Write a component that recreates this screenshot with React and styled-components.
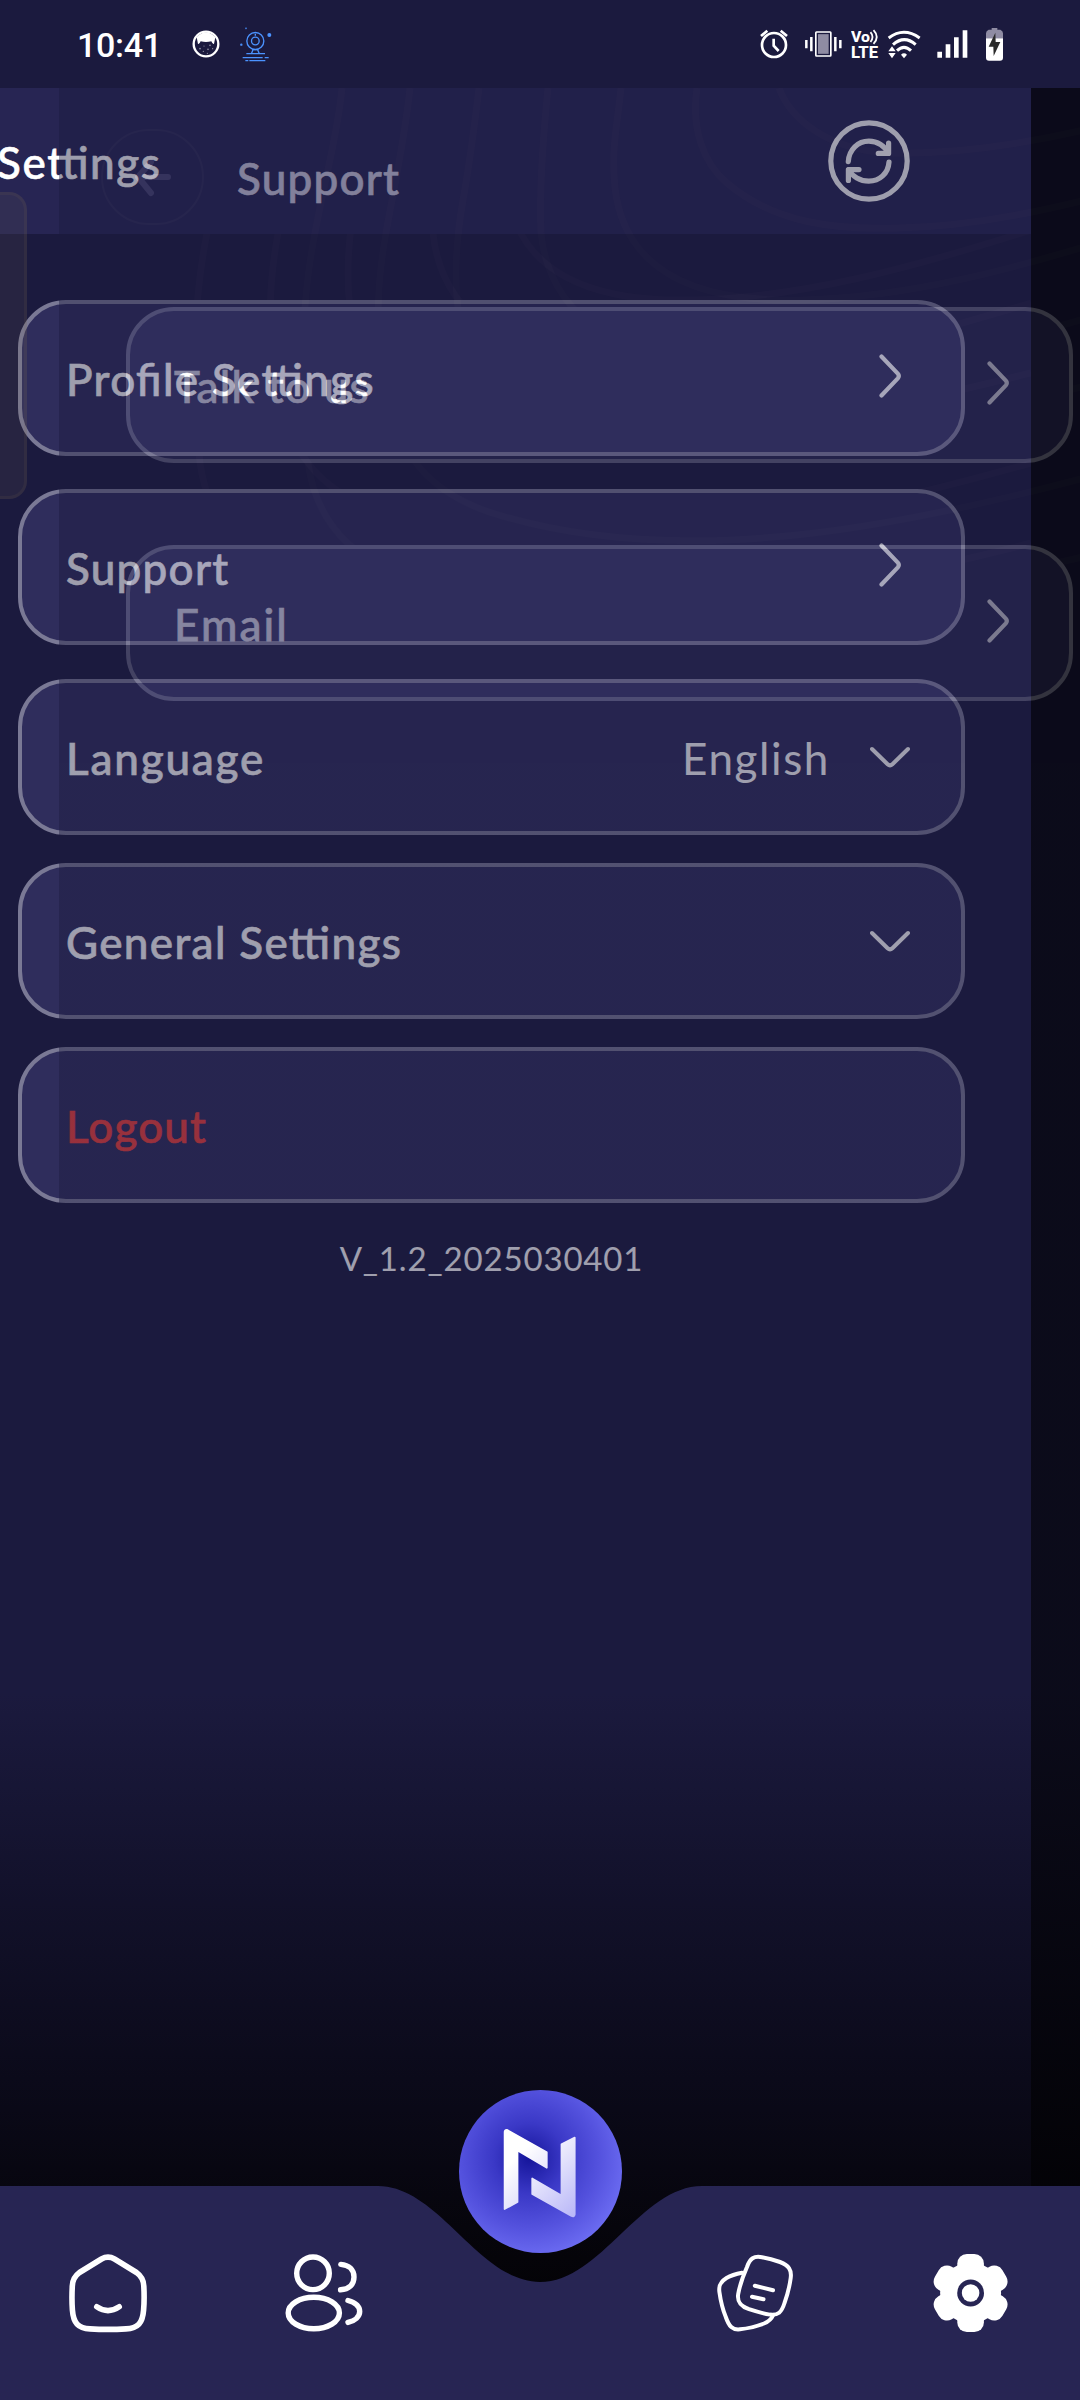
import React from "react";
import styled, { createGlobalStyle } from "styled-components";

const GlobalStyle = createGlobalStyle`
  *, *::before, *::after { box-sizing: border-box; }
  html, body { margin: 0; padding: 0; background: #000; }
  svg { display: block; flex: none; }
`;

const FONT = `Lato, "Noto Sans", sans-serif`;

const Screen = styled.div`
  width: 1080px;
  height: 2400px;
  display: grid;
  grid-template-rows: 88px 1fr;
  overflow: hidden;
  background: #000;
  font-family: ${FONT};
  color: #fff;
`;

/* ---------- status bar ---------- */

const StatusBar = styled.header`
  display: flex;
  align-items: center;
  justify-content: space-between;
  padding: 0 77px 0 77px;
  background: #1b1a3e;
`;

const StatusGroup = styled.div`
  display: flex;
  align-items: center;
  gap: ${(p) => p.$gap || 0}px;
  margin-left: ${(p) => p.$before || 0}px;
`;

const Clock = styled.span`
  font: 500 34px/40px Roboto, sans-serif;
  letter-spacing: -0.3px;
  margin-right: 30px;
  padding-top: 2px;
`;

/* ---------- pages ---------- */

const Stage = styled.main`
  display: grid;
  grid-template: 1fr / 1080px;
  min-height: 0;
  overflow: hidden;

  & > * {
    grid-area: 1 / 1;
  }
`;

const Page = styled.section`
  display: grid;
  grid-template: 1fr / 1080px;
  overflow: hidden;
  background: linear-gradient(
    180deg,
    #1b1a3e 0,
    #1b1a3e 1605px,
    #12112a 1815px,
    #0b0a1a 1990px,
    #050409 2170px,
    #000 2312px
  );
  transform: translateX(${(p) => p.$shift}px);
  opacity: ${(p) => p.$opacity || 1};

  & > * {
    grid-area: 1 / 1;
  }
`;

const PageBody = styled.div`
  display: flex;
  flex-direction: column;
`;

const SettingsHeader = styled.div`
  display: flex;
  align-items: center;
  justify-content: space-between;
  height: 146px;
  padding: 0 121px 0 46px;
  background: #272553;
`;

const SupportHeader = styled.div`
  display: flex;
  align-items: center;
  gap: 33px;
  height: 177px;
  padding: 0 42px;
`;

const BackButton = styled.button`
  display: grid;
  place-items: center;
  width: 103px;
  height: 96px;
  padding: 0;
  border: 2px solid rgba(255, 255, 255, 0.05);
  border-radius: 50px;
  background: none;
  color: #49476c;
`;

const Label = styled.span`
  font-family: ${FONT};
  font-size: 44px;
  line-height: 56px;
  padding-top: 2px;
  font-weight: ${(p) => p.$weight || 500};
  letter-spacing: ${(p) => p.$track || 0}px;
  font-feature-settings: "liga" 1;
  -webkit-text-stroke: ${(p) => (p.$weight ? 0 : 0.6)}px currentColor;
  color: ${(p) => p.$color || "#fff"};
  white-space: pre;
`;

const List = styled.div`
  display: flex;
  flex-direction: column;
  padding: ${(p) => p.$top}px 66px 0 67px;
`;

const Item = styled.div`
  display: flex;
  align-items: center;
  justify-content: space-between;
  height: 156px;
  margin-bottom: ${(p) => p.$after}px;
  padding: 0 51px 0 44px;
  border: 4px solid #7a7995;
  border-radius: 48px;
  background: #2f2d5c;
`;

const ItemValue = styled.div`
  display: flex;
  align-items: center;
  gap: 40px;
`;

const Version = styled.p`
  margin: 35px 0 0;
  text-align: center;
  font-size: 33px;
  line-height: 40px;
  font-weight: 400;
  letter-spacing: 0.85px;
`;

const SideCard = styled.div`
  align-self: start;
  justify-self: start;
  width: 27px;
  height: 307px;
  margin-top: 104px;
  border: 3px solid rgba(120, 110, 85, 0.12);
  border-left: 0;
  border-radius: 0 18px 18px 0;
  background: rgba(120, 110, 85, 0.13);
  z-index: 1;
`;

/* ---------- bottom navigation ---------- */

const Nav = styled.nav`
  align-self: end;
  display: grid;
  grid-template: 310px / 1080px;
  z-index: 2;

  & > * {
    grid-area: 1 / 1;
  }
`;

const NavShape = styled.svg`
  align-self: end;
`;

const NavItems = styled.div`
  display: grid;
  grid-template-columns: repeat(5, 216px);
  justify-items: center;
  align-items: end;
  padding-bottom: 67px;
  z-index: 1;
`;

const Fab = styled.div`
  align-self: start;
  width: 163px;
  height: 163px;
  border-radius: 50%;
  background: radial-gradient(circle at 43% 42%, #15159a 0, #3a38c6 35px, #5452de 70px, #6c6cf2 100px, #7474f6 120px);
`;

/* ---------- drawings ---------- */

const stroke = { fill: "none", stroke: "currentColor", strokeLinecap: "round", strokeLinejoin: "round" };

const CONTOURS = [
  "M283 0 C279 45 266 90 256 145 C244 205 240 270 249 375 C258 440 300 480 380 500 C600 545 830 520 1080 455",
  "M351 0 C346 50 333 110 327 145 C317 200 318 240 322 280 C334 370 375 405 430 424 C620 485 850 440 1080 375",
  "M420 0 C414 50 408 90 404 112 C394 170 395 215 405 250 C430 330 520 357 640 357 C790 353 960 315 1080 285",
  "M489 0 C484 50 480 100 482 145 C490 225 560 280 690 287 C830 290 960 250 1080 215",
  "M562 0 C558 40 552 60 556 100 C566 185 640 214 740 212 C850 210 960 180 1080 142",
  "M638 0 C632 40 644 75 668 95 C715 135 775 142 840 140 C920 138 1000 120 1080 98",
  "M720 0 C732 32 770 62 830 65 C910 67 1000 50 1080 28",
];

const Contours = () => (
  <svg width="1080" height="600" viewBox="0 0 1080 600" fill="none" stroke="#ffe8cc" strokeOpacity="0.028" strokeWidth="7">
    {CONTOURS.map((d) => (
      <path key={d} d={d} />
    ))}
  </svg>
);

const ChevronRight = () => (
  <svg width="40" height="44" viewBox="0 0 40 44" strokeWidth="4.2" transform="translate(0 -2)" {...stroke}>
    <path d="M11.5 2.5 L27.8 19.6 Q29.8 22 27.8 24.4 L11.5 41.5" />
  </svg>
);

const ChevronDown = () => (
  <svg width="40" height="24" viewBox="0 0 40 24" strokeWidth="4" transform="translate(0 1)" {...stroke}>
    <path d="M2 3 L17.6 18.3 Q20 20.6 22.4 18.3 L38 3" />
  </svg>
);

const ArrowLeft = () => (
  <svg width="40" height="40" viewBox="0 0 40 40" {...stroke} strokeWidth="6">
    <path d="M35 20 H7 M18 5 L5 20 L18 36" />
  </svg>
);

const RefreshIcon = () => (
  <svg width="82" height="82" viewBox="0 0 82 82" {...stroke} strokeWidth="5.2">
    <circle cx="41" cy="41" r="38.2" />
    <path d="M20.3 41.7 C21 29.5 30 21.2 40.8 21.2 C49.5 21.2 57 26 60.2 33.2" />
    <path d="M60.6 23 V33.4 H50.3" />
    <path d="M61 42 C60.3 53.5 51.5 61.2 40.8 61.2 C32 61.2 24.3 56.5 20.8 49.6" />
    <path d="M20.4 60.4 V49.6 H31" />
  </svg>
);

const MaskIcon = () => (
  <svg width="28" height="28" viewBox="0 0 84 84">
    <circle cx="42" cy="42" r="37" fill="none" stroke="#fff" strokeWidth="7" />
    <path d="M14 22 Q42 -8 70 22 L66 42 Q62 44 58 34 Q42 38 26 34 Q22 44 18 42 Z" fill="#fff" />
    <g fill="#fff" opacity="0.55">
      <circle cx="24" cy="56" r="2.4" />
      <circle cx="36" cy="48" r="1.8" />
      <circle cx="34" cy="64" r="2" />
      <circle cx="48" cy="58" r="2.4" />
      <circle cx="54" cy="46" r="2.4" />
      <circle cx="62" cy="56" r="1.8" />
      <circle cx="46" cy="70" r="1.8" />
    </g>
  </svg>
);

const WebcamIcon = () => (
  <svg width="32" height="35" viewBox="0 0 96 105" fill="none" stroke="#4b93ff" strokeWidth="4">
    <circle cx="46" cy="42" r="25.5" />
    <circle cx="46" cy="42" r="11.5" />
    <path d="M40 66 L34 80 M52 66 L58 80 M38 68 H54 M19 80 H75 M8 92 H68 M74 92 H86 M16 101 H25 M28 101 H76 M46 20 V26" />
    <circle cx="88" cy="24" r="4" fill="#4b93ff" />
    <circle cx="4" cy="53" r="1.6" />
    <circle cx="18" cy="4" r="0.8" />
  </svg>
);

const AlarmIcon = () => (
  <svg width="28" height="30" viewBox="0 0 84 90" fill="none" stroke="#fff" strokeWidth="8">
    <circle cx="42" cy="48" r="36" />
    <path d="M41 29 V50 L56 66" />
    <path d="M3 21 L22 5 M62 5 L81 21" />
  </svg>
);

const VibrateIcon = () => (
  <svg width="37" height="26" viewBox="0 0 111 78">
    <rect x="32.500" y="3" width="45" height="72" rx="2" fill="none" stroke="#fff" strokeWidth="5" />
    <rect x="39" y="9.500" width="32" height="59" fill="#8f8ca3" />
    <path d="M4 27 V52 M19 18 V61 M91 18 V61 M106 27 V52" stroke="#fff" strokeWidth="7.500" />
  </svg>
);

const VolteIcon = () => (
  <svg width="28" height="30" viewBox="0 0 28 30" fill="#fff" fontFamily="Roboto, sans-serif" fontWeight="800">
    <text x="0" y="13" fontSize="15.5" textLength="19" lengthAdjust="spacingAndGlyphs">Vo</text>
    <path d="M19.500 3.200 Q23.500 8 19.500 13 M22.500 1.200 Q29 8 22.500 14.800" fill="none" stroke="#fff" strokeWidth="1.800" />
    <text x="0" y="28.5" fontSize="16.5" textLength="27" lengthAdjust="spacingAndGlyphs">LTE</text>
  </svg>
);

const WifiIcon = () => (
  <svg width="34" height="29" viewBox="0 0 102 87" fill="none" stroke="#fff" strokeWidth="9">
    <path d="M5 24 Q50 -10 98 24" />
    <path d="M18 44 Q52 14 86 44" />
    <path d="M30 62 Q51 42 72 62" />
    <path d="M42 74 Q51 66 60 74 L51 85 Z M4 64 L15 49 L26 64 Z M4 69 H26 L15 85 Z" fill="#fff" stroke="none" />
  </svg>
);

const SignalIcon = () => (
  <svg width="31" height="28" viewBox="0 0 93 84" fill="#fff">
    <path d="M1 65h14v18h-14z M26 43h14v40h-14z M51 22h14v61h-14z M77 1h14v82h-14z" />
  </svg>
);

const BatteryIcon = () => (
  <svg width="17" height="33" viewBox="0 0 51 99">
    <path d="M17 0 H34 V5 H43 Q51 8 51 16 V31 H0 V16 Q0 8 8 5 H17 Z" fill="#8f8ca3" />
    <path d="M0 31 H51 V89 Q51 98 42 98 H9 Q0 98 0 89 Z" fill="#fff" />
    <path d="M28 14 L8 56 H22 L23 84 L43 42 H29 Z" fill="#2b2b2b" />
  </svg>
);

const HomeIcon = () => (
  <svg width="80" height="80" viewBox="0 0 80 80" {...stroke} strokeWidth="5.6">
    <path d="M33.5 6 Q40 2.2 46.5 6 L68.5 19.5 Q75.5 24.5 75.8 33 C76.3 42 76.3 49 75.6 57 C74.6 70 70 75.4 58 75.9 C46 76.6 34 76.6 22 75.9 C10 75.4 5.4 70 4.4 57 C3.8 49 3.8 42 4.3 33 Q4.6 24.5 11.5 19.5 Z" />
    <path d="M28.8 53.8 Q40 61.5 51.2 53.8" />
  </svg>
);

const UsersIcon = () => (
  <svg width="80" height="80" viewBox="0 0 80 80" {...stroke} strokeWidth="5.4">
    <circle cx="29" cy="20.3" r="16.3" />
    <ellipse cx="29.8" cy="60" rx="25.6" ry="15.7" />
    <path d="M56.8 11.4 C65 12 70 17 70 24 C70 31.5 65 36.5 56.6 36.8" />
    <path d="M64 47.5 C71 49.5 75.7 53.5 75.7 58.5 C75.7 63.5 71 67.7 64 69.4" />
  </svg>
);

const CardsIcon = () => (
  <svg width="80" height="80" viewBox="0 0 80 80" {...stroke} strokeWidth="4">
    <path d="M31 14 C34 5 38 2.8 46 4.2 C52 5.2 58 6.8 64 9 C73 12.5 75.8 17 74.7 25 C73.5 34 71 43 68.5 50 C65.5 59.5 62 62.5 54 61.6 C46 60.3 40 58.5 33 56.2 C24 53 21 48.5 22.2 41 C24 31 27.5 22 31 14 Z" />
    <path d="M26 19.8 C20 21 15 22.5 10.5 25 C4 29 2.6 33 3.4 39 C4.5 47 6.5 56 9.8 64 C13 73.5 16.5 77.2 24 76.3 C32 75.5 40 73.5 48 70.5 C53 68.5 55.5 66 57.2 62" />
    <path d="M38.8 32.8 L57 37.2 M36 43.7 L47.5 46.3" />
  </svg>
);

const GearIcon = () => (
  <svg width="80" height="80" viewBox="0 0 80 80">
    <g fill="#fff">
      {[0, 60, 120].map((angle) => (
        <rect key={angle} x="25.3" y="1" width="26.6" height="78" rx="9.5" transform={`rotate(${angle} 38.6 40)`} />
      ))}
      <circle cx="38.6" cy="40" r="30.5" />
    </g>
    <circle cx="38.6" cy="40" r="13.4" fill="#272553" />
    <circle cx="38.6" cy="40" r="8.8" fill="#fff" />
  </svg>
);

const Logo = () => (
  <svg width="163" height="163" viewBox="55 30 490 490">
    <defs>
      <linearGradient id="mark" gradientUnits="userSpaceOnUse" x1="230" y1="230" x2="400" y2="410">
        <stop offset="0" stopColor="#ffffff" />
        <stop offset="0.35" stopColor="#e8e7fc" />
        <stop offset="1" stopColor="#b9b7f8" />
      </linearGradient>
    </defs>
    <g fill="url(#mark)" stroke="url(#mark)" strokeWidth="5" strokeLinejoin="round">
      <path d="M192 156 Q193 149 200 150 L319 217 V264 L231 212 V367 L192 388 Z" />
      <path d="M403 173 L363 193 V347 L275 296 V343 L393 409 Q402 412 403 404 Z" />
    </g>
  </svg>
);

export default function App() {
  return (
    <Screen>
      <GlobalStyle />
      <StatusBar>
        <StatusGroup>
          <Clock>10:41</Clock>
          <StatusGroup $gap={20}>
            <MaskIcon />
            <WebcamIcon />
          </StatusGroup>
        </StatusGroup>
        <StatusGroup>
          <StatusGroup $gap={17}>
            <AlarmIcon />
            <VibrateIcon />
          </StatusGroup>
          <StatusGroup $gap={8} $before={9}>
            <VolteIcon />
            <WifiIcon />
          </StatusGroup>
          <StatusGroup $gap={18} $before={16}>
            <SignalIcon />
            <BatteryIcon />
          </StatusGroup>
        </StatusGroup>
      </StatusBar>

      <Stage>
        <Page $shift={-49}>
          <Contours />
          <PageBody>
            <SettingsHeader>
              <Label $track={1.6}>Settings</Label>
              <RefreshIcon />
            </SettingsHeader>
            <List $top={66}>
              <Item $after={33}>
                <Label $track={1.35}>Profile Settings</Label>
                <ChevronRight />
              </Item>
              <Item $after={34}>
                <Label $track={1.25}>Support</Label>
                <ChevronRight />
              </Item>
              <Item $after={28}>
                <Label $track={1.8}>Language</Label>
                <ItemValue>
                  <Label $weight={400} $track={1.6}>English</Label>
                  <ChevronDown />
                </ItemValue>
              </Item>
              <Item $after={28}>
                <Label $track={1.35}>General Settings</Label>
                <ChevronDown />
              </Item>
              <Item $after={0}>
                <Label $track={1.15} $color="#f2413b">Logout</Label>
              </Item>
              <Version>V_1.2_2025030401</Version>
            </List>
          </PageBody>
        </Page>

        <SideCard />

        <Page $shift={59} $opacity={0.42}>
          <Contours />
          <PageBody>
            <SupportHeader>
              <BackButton aria-label="Back">
                <ArrowLeft />
              </BackButton>
              <Label $track={1.2}>Support</Label>
            </SupportHeader>
            <List $top={42}>
              <Item $after={82}>
                <Label $track={1.3}>Talk to us</Label>
                <ChevronRight />
              </Item>
              <Item $after={0}>
                <Label $track={2.1}>Email</Label>
                <ChevronRight />
              </Item>
            </List>
          </PageBody>
        </Page>

        <Nav>
          <NavShape width="1080" height="214" viewBox="0 0 1080 214">
            <path d="M0 0 H378 C439 0 479 96 540 96 S641 0 702 0 H1080 V214 H0 Z" fill="#272553" />
          </NavShape>
          <NavItems>
            <HomeIcon />
            <UsersIcon />
            <Fab>
              <Logo />
            </Fab>
            <CardsIcon />
            <GearIcon />
          </NavItems>
        </Nav>
      </Stage>
    </Screen>
  );
}
